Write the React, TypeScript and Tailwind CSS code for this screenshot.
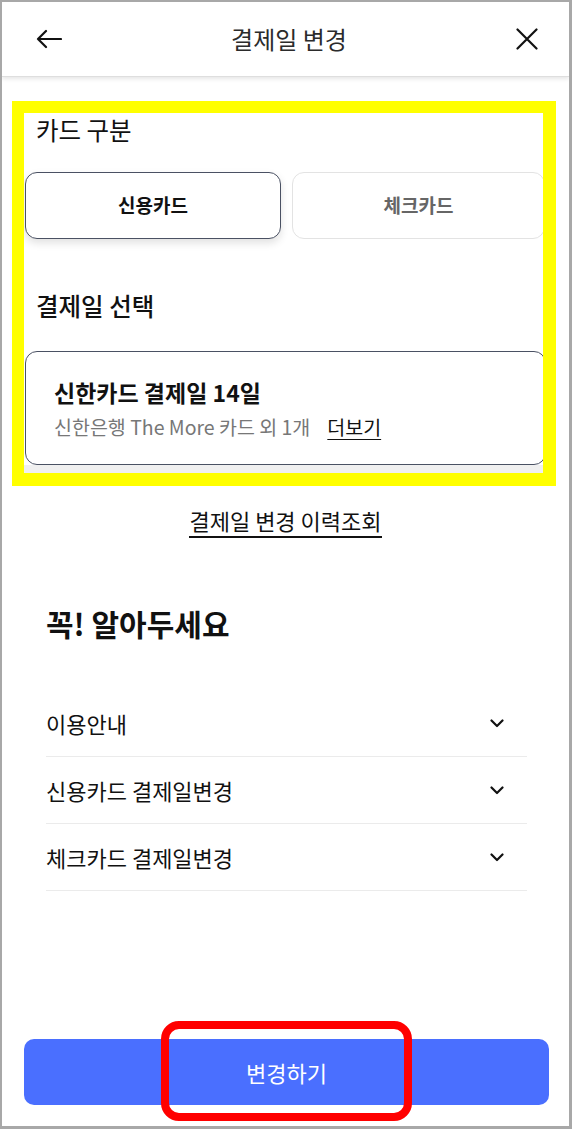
import React from "react";

const FONT = { fontFamily: '"Noto Sans CJK KR", "Noto Sans", sans-serif' };

function Chevron() {
  return (
    <svg width="14" height="9" viewBox="0 0 14 9" fill="none">
      <path d="M1.5 1.5 L7 7 L12.5 1.5" stroke="#111" strokeWidth="2.2" strokeLinecap="round" strokeLinejoin="round" />
    </svg>
  );
}

export default function App() {
  const items = ["이용안내", "신용카드 결제일변경", "체크카드 결제일변경"];
  return (
    <div
      className="relative w-[572px] h-[1129px] bg-white border-l-2 border-t-2 border-r-[3px] border-b-[3px] border-[#a8a8a8] flex flex-col overflow-hidden"
      style={FONT}
    >
      {/* Header */}
      <div className="relative z-10 h-[75px] shrink-0 flex items-center justify-between pl-[34px] pr-[31px] bg-white border-b border-[#dedede] shadow-[0_2px_4px_rgba(0,0,0,0.10)]">
        <svg width="26" height="20" viewBox="0 0 26 20" fill="none">
          <path d="M25 10H2 M10 2 L2 10 L10 18" stroke="#111" strokeWidth="2.2" strokeLinecap="round" strokeLinejoin="round" />
        </svg>
        <div className="text-[24px] leading-[30px] text-[#2b2b2b]">결제일 변경</div>
        <svg width="22" height="22" viewBox="0 0 22 22" fill="none">
          <path d="M1.5 1.5 L20.5 20.5 M20.5 1.5 L1.5 20.5" stroke="#111" strokeWidth="2.2" strokeLinecap="round" />
        </svg>
      </div>

      {/* Highlighted section */}
      <div className="mt-[24px] ml-[10px] w-[544px] border-l-[12px] border-t-[12px] border-r-[13px] border-b-[13px] border-[#ffff00] shrink-0">
        <div className="w-[519px] overflow-hidden bg-white">
          <div className="mt-[2px] ml-[12px] text-[24.5px] leading-[30px] text-[#111]">카드 구분</div>
          <div className="mt-[27px] ml-[1px] flex gap-[11px] w-[520px] pb-[1px]">
            <div className="shrink-0 w-[256px] h-[67px] rounded-[12px] border border-[#4a5163] bg-white shadow-[0_4px_8px_rgba(0,0,0,0.12)] flex items-center justify-center text-[19px] font-bold text-[#111]">
              신용카드
            </div>
            <div className="shrink-0 w-[253px] h-[67px] rounded-[12px] border border-[#e3e3e3] bg-white flex items-center justify-center text-[19px] font-bold text-[#666]">
              체크카드
            </div>
          </div>
          <div className="mt-[51px] ml-[12px] text-[24.5px] leading-[30px] font-medium text-[#111]">결제일 선택</div>
          <div className="mt-[30px] ml-[1px] w-[521px] h-[114px] rounded-[12px] border border-[#4a5163] bg-white pl-[28px] pt-[25px]">
            <div className="text-[23px] leading-[30px] font-bold text-[#111]">신한카드 결제일 14일</div>
            <div className="mt-[7px] text-[19.5px] leading-[26px] text-[#777] flex items-center">
              <span>신한은행 The More 카드 외 1개</span>
              <span className="ml-[17px] text-[#111] underline underline-offset-[4px]">더보기</span>
            </div>
          </div>
          <div className="h-[8px] bg-[#f0f0f0]" />
        </div>
      </div>

      {/* History link */}
      <div className="mt-[21px] flex justify-center shrink-0">
        <span className="inline-block text-[22px] leading-[26px] pb-[3px] border-b-2 border-[#111] text-[#111]">
          결제일 변경 이력조회
        </span>
      </div>

      {/* Notice */}
      <div className="mt-[66px] ml-[44px] text-[30px] leading-[38px] font-bold text-[#111] shrink-0">꼭! 알아두세요</div>

      <div className="mt-[48px] ml-[44px] w-[481px] shrink-0">
        {items.map((t) => (
          <div key={t} className="h-[67px] border-b border-[#ebebeb] flex items-center justify-between pr-[23px]">
            <span className="text-[22px] leading-[28px] text-[#111]">{t}</span>
            <Chevron />
          </div>
        ))}
      </div>

      {/* Bottom button */}
      <div className="mt-auto mb-[21px] ml-[22px] w-[525px] h-[66px] rounded-[10px] bg-[#4a6fff] flex items-center justify-center text-white text-[22px] shrink-0">
        변경하기
      </div>

      {/* Red annotation box */}
      <div className="absolute left-[159px] top-[1019px] w-[251px] h-[100px] border-[8px] border-[#ff0000] rounded-[18px] pointer-events-none" />
    </div>
  );
}
